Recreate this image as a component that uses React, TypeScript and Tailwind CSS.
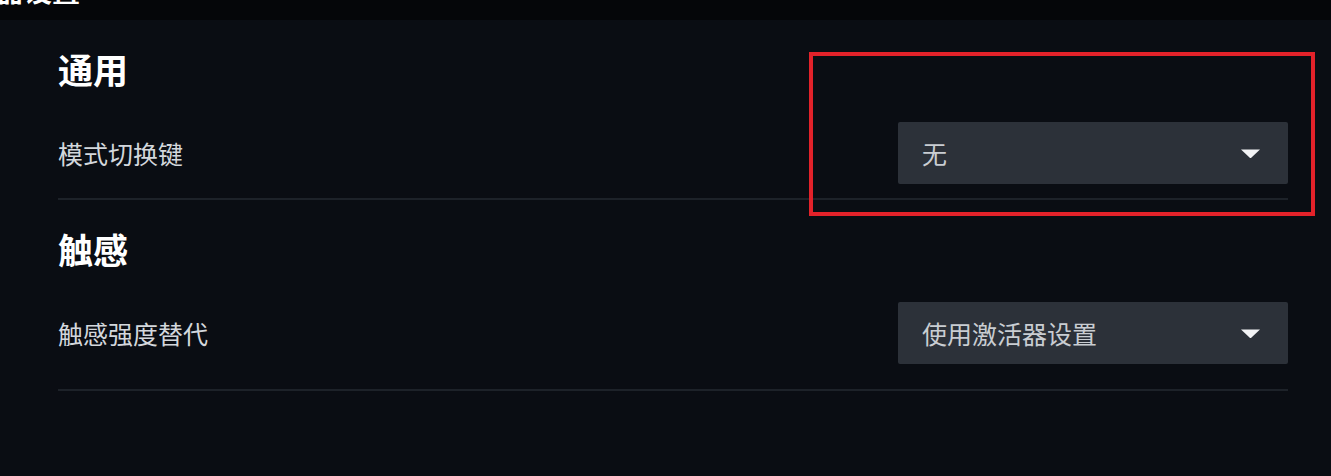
import React from 'react';

const font = { fontFamily: '"Noto Sans CJK SC", "Noto Sans", sans-serif' };

function Caret() {
  return (
    <svg width="21" height="11" viewBox="0 0 21 11" className="shrink-0">
      <path d="M1 1.5 H20 L11.5 9.5 Q10.5 10.5 9.5 9.5 Z" fill="#f2f3f5" />
    </svg>
  );
}

function Select({ value }: { value: string }) {
  return (
    <div className="w-[390px] h-[62px] bg-[#2c3139] rounded-[2px] flex items-center justify-between pl-6 pr-[27px]">
      <span className="text-[25px] leading-none text-[#c9cdd2]">{value}</span>
      <Caret />
    </div>
  );
}

function Section({ title, label, value, last }: { title: string; label: string; value: string; last?: boolean }) {
  return (
    <section className="pt-[30px]">
      <h2 className="text-[35px] leading-[38px] font-bold text-white">{title}</h2>
      <div className={`mt-[34px] flex items-center justify-between border-b-2 border-[#1d2229] ${last ? 'pb-[25px]' : 'pb-[14px]'}`}>
        <span className="text-[25px] leading-none text-[#d3d7dc]">{label}</span>
        <Select value={value} />
      </div>
    </section>
  );
}

export default function App() {
  return (
    <div className="relative w-[1331px] h-[476px] bg-[#0a0d13] overflow-hidden" style={font}>
      <header className="h-[20px] bg-[#050609] overflow-hidden">
        <div className="-mt-[24px] -ml-[60px] text-[28px] leading-[28px] font-bold text-white">激活器设置</div>
      </header>
      <main className="pl-[58px] pr-[43px]">
        <Section title="通用" label="模式切换键" value="无" />
        <Section title="触感" label="触感强度替代" value="使用激活器设置" last />
      </main>
      <div className="absolute left-[809px] top-[52px] w-[506px] h-[164px] border-4 border-[#e3222a]" />
    </div>
  );
}
